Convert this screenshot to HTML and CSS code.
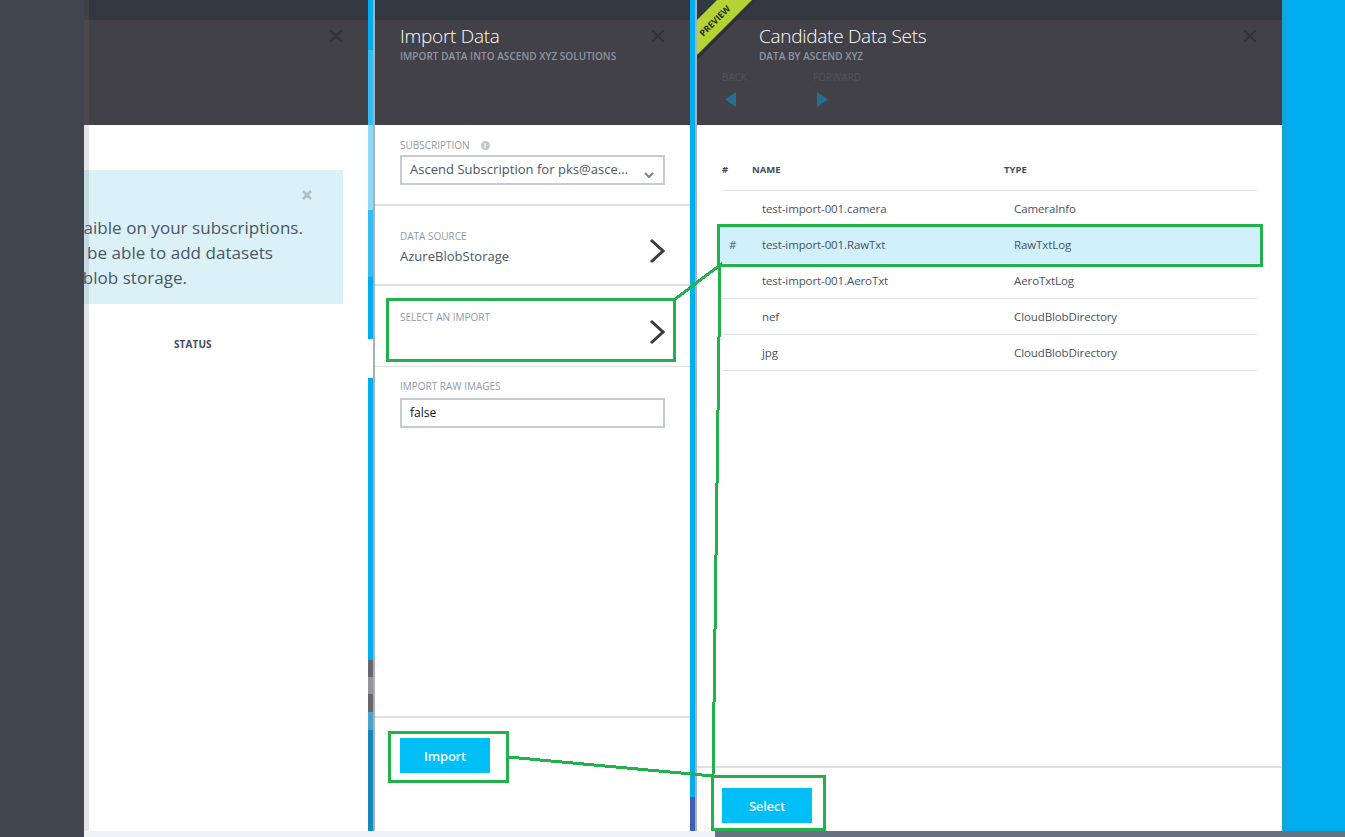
FILE: index.html
```html
<!DOCTYPE html>
<html lang="en">
<head>
<meta charset="utf-8">
<title>Import Data</title>
<link rel="stylesheet" href="styles.css">
</head>
<body>
<div class="app">
  <aside class="rail"></aside>
  <div class="main">
    <div class="blades">
      <section class="blade blade-one">
        <div class="topstrip"></div>
        <header class="head head-one">
          <svg class="close" viewBox="0 0 14 14"><path d="M1 1L13 13M13 1L1 13"/></svg>
        </header>
        <div class="body-one">
          <div class="notice">
            <svg class="notice-x" viewBox="0 0 10 10"><path d="M1 1L9 9M9 1L1 9"/></svg>
            <p class="line line-a"><span>aible on your subscriptions.</span></p>
            <p class="line line-b"><span>be able to add datasets</span></p>
            <p class="line line-c"><span>blob storage.</span></p>
          </div>
          <div class="status">STATUS</div>
        </div>
        <div class="tint"></div>
      </section>

      <div class="seam seam-left">
        <div class="seam-blue">
          <i class="s1"></i><i class="s2"></i><i class="s3"></i><i class="s4"></i><i class="s5"></i><i class="s6"></i><i class="s7"></i><i class="s8"></i><i class="s9"></i><i class="s10"></i><i class="s11"></i><i class="s12"></i>
        </div>
        <div class="seam-gray"></div>
      </div>

      <section class="blade blade-two">
        <div class="topstrip"></div>
        <header class="head head-two">
          <div class="head-row">
            <div>
              <h1 class="title">Import Data</h1>
              <p class="subtitle">IMPORT DATA INTO ASCEND XYZ SOLUTIONS</p>
            </div>
            <svg class="close" viewBox="0 0 14 14"><path d="M1 1L13 13M13 1L1 13"/></svg>
          </div>
        </header>
        <div class="field field-sub">
          <div class="label label-info">SUBSCRIPTION <span class="info">i</span></div>
          <div class="select">
            <span>Ascend Subscription for pks@asce...</span>
            <svg class="caret" viewBox="0 0 10 6"><path d="M1 1L5 5L9 1"/></svg>
          </div>
        </div>
        <div class="field field-nav field-ds">
          <div>
            <div class="label">DATA SOURCE</div>
            <div class="value">AzureBlobStorage</div>
          </div>
          <svg class="chev" viewBox="0 0 16 26"><path d="M2 2L14 13L2 24"/></svg>
        </div>
        <div class="field field-nav field-imp">
          <div class="label">SELECT AN IMPORT</div>
          <svg class="chev" viewBox="0 0 16 26"><path d="M2 2L14 13L2 24"/></svg>
        </div>
        <div class="field field-raw">
          <div class="label">IMPORT RAW IMAGES</div>
          <div class="input">false</div>
        </div>
        <footer class="foot foot-two"><div class="btn">Import</div></footer>
      </section>

      <div class="seam seam-right">
        <div class="seam-blue"><i class="r1"></i><i class="r2"></i></div>
        <div class="seam-gray"></div>
      </div>

      <section class="blade blade-three">
        <div class="topstrip"></div>
        <header class="head head-three">
          <div class="title-wrap">
            <h1 class="title">Candidate Data Sets</h1>
            <p class="subtitle">DATA BY ASCEND XYZ</p>
          </div>
          <svg class="close" viewBox="0 0 14 14"><path d="M1 1L13 13M13 1L1 13"/></svg>
          <div class="pager">
            <div class="pager-item"><span>BACK</span><svg class="tri tri-back" viewBox="0 0 11 15"><path d="M11 0V15L0 7.5Z"/></svg></div>
            <div class="pager-item"><span>FORWARD</span><svg class="tri tri-fwd" viewBox="0 0 11 15"><path d="M0 0V15L11 7.5Z"/></svg></div>
          </div>
        </header>
        <div class="table-wrap">
          <div class="thead">
            <span class="c-hash">#</span><span class="c-name">NAME</span><span class="c-type">TYPE</span>
          </div>
          <div class="row"><span class="c-hash"></span><span class="c-name">test-import-001.camera</span><span class="c-type">CameraInfo</span></div>
          <div class="row row-sel"><span class="c-hash">#</span><span class="c-name">test-import-001.RawTxt</span><span class="c-type">RawTxtLog</span></div>
          <div class="row"><span class="c-hash"></span><span class="c-name">test-import-001.AeroTxt</span><span class="c-type">AeroTxtLog</span></div>
          <div class="row"><span class="c-hash"></span><span class="c-name">nef</span><span class="c-type">CloudBlobDirectory</span></div>
          <div class="row"><span class="c-hash"></span><span class="c-name">jpg</span><span class="c-type">CloudBlobDirectory</span></div>
        </div>
        <footer class="foot foot-three"><div class="btn">Select</div></footer>
      </section>

      <div class="backdrop"></div>
    </div>
    <div class="bottom"><div class="bottom-l"></div><div class="bottom-r"></div></div>
  </div>
</div>

<div class="ribbon"><svg viewBox="0 0 60 60"><path class="rib-shadow" d="M0 55L55 0H60L0 60Z"/><path class="rib-green" d="M0 20L20 0H55L0 55Z"/></svg><span class="rib-text">PREVIEW</span></div>

<svg class="annot" viewBox="0 0 1345 837">
  <rect x="387" y="299" width="287" height="61"/>
  <rect x="718" y="225" width="543" height="40"/>
  <rect x="389" y="732" width="118" height="49"/>
  <rect x="712.500" y="776" width="112" height="53"/>
  <path d="M674 300L720 265L713 776"/>
  <path d="M508 757L713 776"/>
</svg>
</body>
</html>
```

FILE: styles.css
```css
* { box-sizing: border-box; }
html, body { margin: 0; padding: 0; }
body {
  width: 1345px;
  height: 837px;
  overflow: hidden;
  font-family: "Open Sans", "Noto Sans", "Liberation Sans", sans-serif;
  background: #fff;
  position: relative;
}
.app { display: flex; height: 837px; }
.rail { width: 84px; background: #3f4650; flex: none; }
.main { flex: 1; display: flex; flex-direction: column; min-width: 0; }
.blades { display: flex; height: 831px; }
.bottom { display: flex; height: 6px; }
.bottom-l { width: 631px; background: #f0f1f7; }
.bottom-r { flex: 1; background: #66727f; }

.blade { display: flex; flex-direction: column; position: relative; background: #fff; flex: none; }
.blade-one { width: 284px; overflow: hidden; }
.blade-two { width: 315px; }
.blade-three { width: 585px; }
.backdrop { flex: 1; background: #00adef; border-left: 5px solid #12a5dd; }

.topstrip { height: 20px; background: #323840; flex: none; }
.head { height: 105px; background: #414147; flex: none; position: relative; }
.close { width: 14px; height: 14px; flex: none; }
.close path { fill: none; stroke: #2e3136; stroke-width: 2; }

/* first blade */
.head-one { display: flex; justify-content: flex-end; padding: 9px 25px 0 0; }
.body-one { flex: 1; position: relative; padding-top: 45px; }
.notice {
  width: 259px;
  height: 134px;
  background: #daf1f7;
  padding-top: 45px;
  position: relative;
  overflow: hidden;
}
.notice-x { position: absolute; right: 31px; top: 20px; width: 10px; height: 10px; }
.notice-x path { fill: none; stroke: #b3bcc1; stroke-width: 2.500; }
.line {
  margin: 0;
  display: flex;
  justify-content: flex-end;
  white-space: nowrap;
  font-size: 17px;
  line-height: 25px;
  color: #4a5565;
  letter-spacing: 0.04px;
}
.line span { flex: none; }
.line-a { padding-right: 40px; }
.line-b { padding-right: 70px; }
.line-c { padding-right: 156px; }
.status { margin: 34px 0 0 90px; font-size: 10px; line-height: 12px; font-weight: 700; color: #3f4a5c; letter-spacing: 0.1px; }
.tint { position: absolute; left: 0; top: 0; bottom: 0; width: 5px; background: rgba(117,117,117,.18); }

/* seams */
.seam { display: flex; flex: none; width: 7px; }
.seam-blue { width: 5px; display: flex; flex-direction: column; }
.seam-gray { width: 2px; background: #a5b1bf; }
.seam-blue i { display: block; flex: none; }
.s1 { height: 50px; background: #00adef; }
.s2 { height: 75px; background: #33bcf1; }
.s3 { height: 85px; background: #8fd9f8; }
.s4 { height: 67px; background: #33bcf1; }
.s5 { height: 62px; background: #00adef; }
.s6 { height: 39px; background: #fff; }
.s7 { height: 282px; background: #00adef; }
.s8 { height: 17px; background: #666769; }
.s9 { height: 17px; background: #939496; }
.s10 { height: 18px; background: #666769; }
.s11 { height: 18px; background: #4aa3c8; }
.s12 { height: 101px; background: #1488b9; }
.r1 { height: 797px; background: #00adef; }
.r2 { height: 34px; background: #3f5fb5; }

/* second blade */
.head-two { padding: 5px 25px 0 25px; }
.head-row { display: flex; justify-content: space-between; align-items: flex-start; }
.head-row .close { margin-top: 4px; }
.title { margin: 0; font-size: 19px; line-height: 22px; font-weight: 300; color: #fff; letter-spacing: -0.28px; }
.subtitle { margin: 3px 0 0; font-size: 10px; line-height: 12px; color: #8e96a2; font-weight: 600; letter-spacing: 0.03px; }

.field { padding-left: 25px; padding-right: 25px; flex: none; border-bottom: 2px solid #dde1e6; }
.field-sub { height: 81px; padding-top: 14px; }
.label { font-size: 10px; line-height: 13px; color: #8d9aaa; font-weight: 400; }
.label-info { display: flex; align-items: center; gap: 7px; }
.info {
  width: 9px;
  height: 9px;
  border-radius: 50%;
  background: #c3c7cc;
  color: #fff;
  font-size: 7px;
  line-height: 9px;
  text-align: center;
  font-weight: 700;
  margin-left: 4px;
}
.select, .input {
  width: 265px;
  border: 2px solid #c6cbd2;
  display: flex;
  align-items: center;
  padding-left: 8px;
}
.select { height: 30px; margin-top: 3px; color: #4a5565; position: relative; font-size: 13px; line-height: 24px; padding-bottom: 2px; letter-spacing: 0.03px; }
.caret { position: absolute; right: 9px; top: 15px; width: 10px; height: 6px; }
.caret path { fill: none; stroke: #7b828c; stroke-width: 2; }
.field-nav { display: flex; justify-content: space-between; }
.field-ds { height: 80px; padding-top: 24px; align-items: flex-start; }
.field-ds .chev { margin-top: 8px; }
.value { font-size: 13px; line-height: 20px; margin-top: 3px; color: #4a5565; letter-spacing: 0.02px; }
.chev { width: 16px; height: 26px; flex: none; }
.chev path { fill: none; stroke: #3c3c3e; stroke-width: 3; }
.field-imp { height: 81px; padding-top: 25px; border-bottom-width: 1px; border-bottom-color: #dde1e6; }
.field-imp .chev { margin-top: 8px; }
.field-raw { flex: 1; border-bottom: 0; padding-top: 13px; }
.input { height: 30px; margin-top: 5px; color: #111; font-size: 12px; line-height: 24px; }

.foot { flex: none; border-top: 2px solid #dde1e6; }
.foot-two { height: 115px; padding: 20px 0 0 25px; }
.foot-three { height: 65px; margin-top: auto; padding: 20px 0 0 25px; }
.btn {
  width: 90px;
  height: 35px;
  background: #00bef6;
  color: #f2fbff;
  font-size: 13px;
  font-weight: 600;
  display: flex;
  align-items: center;
  justify-content: center;
  letter-spacing: -0.2px;
}

/* third blade */
.head-three { display: flex; justify-content: flex-end; padding: 9px 25px 0 0; }
.title-wrap { position: absolute; left: 62px; top: 5px; }
.pager { position: absolute; left: 25px; top: 51px; display: flex; gap: 0; }
.pager-item { width: 91px; display: flex; flex-direction: column; }
.pager-item span { font-size: 10px; line-height: 12px; color: #4f5359; font-weight: 400; }
.tri { width: 11px; height: 15px; margin-top: 9px; }
.tri path { fill: #256f8f; }
.tri-back { margin-left: 3px; }
.tri-fwd { margin-left: 4px; }

.table-wrap { margin: 0 25px; }
.thead {
  display: flex;
  height: 66px;
  align-items: flex-end;
  padding-bottom: 14px;
  border-bottom: 1px solid #dde1e6;
  font-size: 9.500px;
  line-height: 12px;
  font-weight: 700;
  color: #3f4a5c;
}
.thead .c-hash { width: 30px; }
.thead .c-name { width: 252px; }
.row {
  display: flex;
  align-items: center;
  height: 36px;
  border-bottom: 1px solid #dde1e6;
  font-size: 11.500px;
  color: #4a5262;
  letter-spacing: -0.1px;
}
.row .c-hash { width: 40px; padding-left: 7px; flex: none; }
.row .c-name { width: 252px; flex: none; }
.row-sel { background: #d0f0fb; margin: 0 -3px; padding: 0 3px; border-bottom-color: transparent; }
.row:has(+ .row-sel) { border-bottom-color: transparent; }

/* overlays */
.ribbon { position: absolute; left: 697px; top: 0; width: 60px; height: 60px; overflow: hidden; }
.ribbon svg { display: block; width: 60px; height: 60px; }
.rib-green { fill: #b5d334; }
.rib-shadow { fill: #2f3238; }
.rib-text {
  position: absolute;
  left: -4px;
  top: 15px;
  width: 44px;
  text-align: center;
  font-size: 9px;
  line-height: 12px;
  font-weight: 700;
  color: #2c2f20;
  transform: rotate(-45deg);
}
.annot { position: absolute; left: 0; top: 0; width: 1345px; height: 837px; pointer-events: none; shape-rendering: crispEdges; }
.annot rect, .annot path { fill: none; stroke: #22b14c; stroke-width: 3; }
```
